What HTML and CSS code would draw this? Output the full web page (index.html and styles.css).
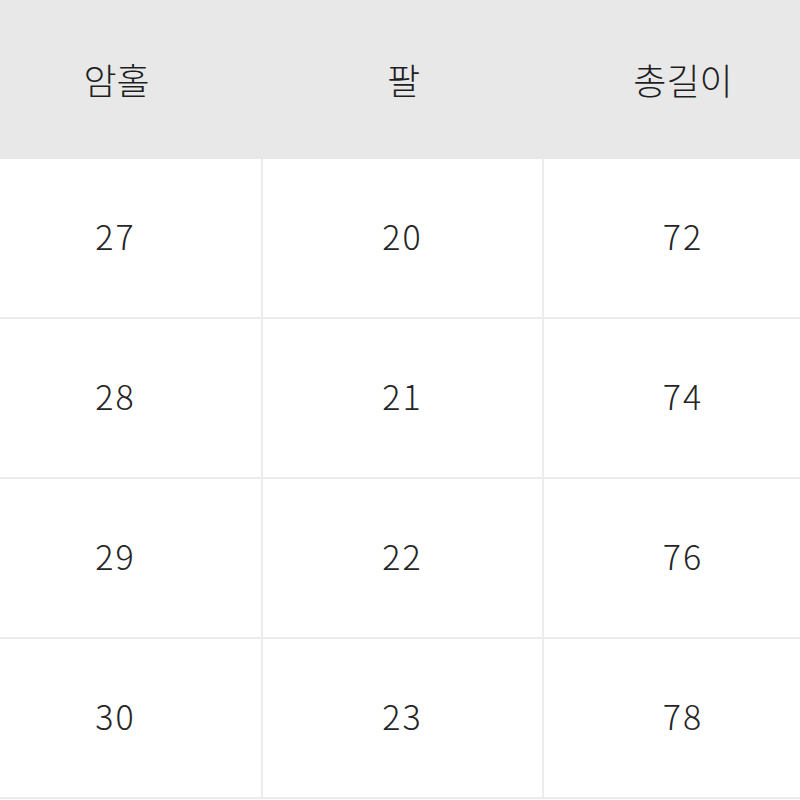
FILE: index.html
```html
<!DOCTYPE html>
<html lang="ko">
<head>
<meta charset="utf-8">
<link rel="stylesheet" href="styles.css">
</head>
<body>
<div class="table">
  <div class="cell head c1">암홀</div>
  <div class="cell head c2">팔</div>
  <div class="cell head c3">총길이</div>

  <div class="cell c1">27</div>
  <div class="cell c2">20</div>
  <div class="cell c3">72</div>

  <div class="cell c1">28</div>
  <div class="cell c2">21</div>
  <div class="cell c3">74</div>

  <div class="cell c1">29</div>
  <div class="cell c2">22</div>
  <div class="cell c3">76</div>

  <div class="cell c1">30</div>
  <div class="cell c2">23</div>
  <div class="cell c3">78</div>
</div>
</body>
</html>
```
FILE: styles.css
```css
html, body {
  margin: 0;
  padding: 0;
  background: #ffffff;
}
.table {
  display: grid;
  grid-template-columns: 263px 281px 256px;
  grid-template-rows: 159px repeat(4, 160px);
  width: 800px;
  font-family: "Noto Sans CJK KR", "Noto Sans", sans-serif;
  color: #262626;
}
.cell {
  display: flex;
  align-items: center;
  justify-content: center;
  font-size: 34px;
  font-weight: 300;
  letter-spacing: 2px;
  padding-bottom: 5px;
  border-bottom: 2px solid #ececec;
  box-sizing: border-box;
}
.head {
  background: #e8e8e8;
  border-bottom: none;
  font-size: 36px;
  letter-spacing: 0;
  font-weight: 300;
  color: #1e1e1e;
  padding-bottom: 2px;
}
.c1 {
  border-right: 2px solid #ececec;
  padding-right: 30px;
}
.c2 {
  border-right: 2px solid #ececec;
}
.c3 {
  padding-left: 22px;
}
.head.c1, .head.c2 {
  border-right: none;
}
```
